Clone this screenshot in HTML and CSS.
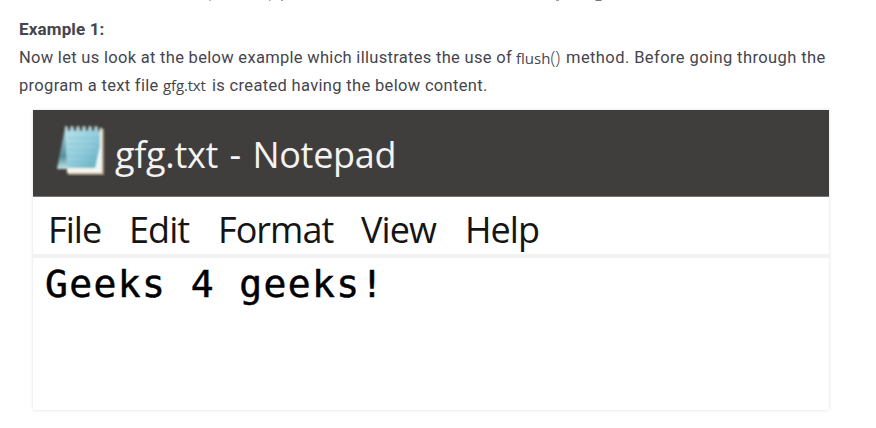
FILE: index.html
```
<!DOCTYPE html>
<html lang="en">
<head>
<meta charset="utf-8">
<title>Example 1</title>
<link rel="stylesheet" href="styles.css">
</head>
<body>
<article class="article">
  <svg class="previous" width="876" height="2" viewBox="0 0 876 2" fill="none" stroke="#777780">
    <path d="M209 .5h2" opacity=".5"/><path d="M269 .5h1.500M281 .5h2M556 .5h3" opacity=".7"/><path d="M595.500 .5h6"/>
  </svg>
  <h2 class="heading">Example 1:</h2>
  <p class="line"><span class="a">Now let us look at the below example which illustrates the use of</span><code class="flush">flush<span class="parens">()</span></code><span class="b">method. Before going through the</span></p>
  <p class="line"><span class="c">program a text file</span><code class="file">gfg.txt</code><span class="d">is created having the below content.</span></p>
  <section class="notepad">
    <header class="titlebar">
      <svg class="icon" width="52" height="54" viewBox="0 0 52 54">
        <defs>
          <linearGradient id="page" x1="0" y1="0" x2="1" y2="1"><stop stop-color="#b9e2ea"/><stop offset=".55" stop-color="#91cbdc"/><stop offset="1" stop-color="#60aebd"/></linearGradient>
          <linearGradient id="fold" x1="0" y1="0" x2="0" y2="1"><stop stop-color="#a9cbd0"/><stop offset=".7" stop-color="#55919b"/><stop offset="1" stop-color="#c5e7e8"/></linearGradient>
          <filter id="soft"><feGaussianBlur stdDeviation=".8"/></filter>
        </defs>
        <g filter="url(#soft)">
          <path d="M10 6L2 47h12V6z" fill="url(#fold)"/>
          <path d="M13 7h36v46H13z" fill="#a79a83"/>
          <path d="M12 6h35v45H12z" fill="#f5f5ec"/>
          <path d="M10 6h35v29l-2 11H12z" fill="url(#page)"/>
          <path d="M45 24v23h-5z" fill="#eaf8fa"/>
          <path d="M13 16h30M13 22h30M13 28h30M13 34h29M13 40h27" stroke="#75b8ca" opacity=".5"/>
          <path d="M14 4v5M20 4v5M26 4v5M32 4v5M38 4v5M44 4v5" stroke="#30434a" stroke-width="2.500"/>
          <path d="M11 4v5M17 4v5M23 4v5M29 4v5M35 4v5M41 4v5" stroke="#c4d2d3" stroke-width="2"/>
        </g>
      </svg>
      <span class="title">gfg.txt - Notepad</span>
    </header>
    <nav class="menu"><span class="m1">File</span><span class="m2">Edit</span><span class="m3">Format</span><span class="m4">View</span><span class="m5">Help</span></nav>
    <div class="content">Geeks 4 geeks!</div>
  </section>
</article>
</body>
</html>
```
FILE: styles.css
```
* { box-sizing: border-box; }
body { margin: 0; background: #fff; overflow: hidden; }
.article { height: 428px; color: #45454e; font: 16.5px/28px Roboto, sans-serif; }
.previous { display: block; }
.heading { margin: 13px 0 0 19px; font-size: 17px; line-height: 28px; font-weight: 700; letter-spacing: .15px; }
.line { margin: 0 0 0 19px; height: 28px; display: flex; white-space: nowrap; line-height: 30px; }
.line span, .line code { flex: none; }
.a { width: 497px; letter-spacing: .3px; }
.b { letter-spacing: .41px; }
.c { width: 144px; letter-spacing: .32px; }
.d { letter-spacing: .33px; }
.flush, .file { font-family: "Open Sans", sans-serif; font-size: 15px; line-height: 28px; }
.flush { width: 50px; letter-spacing: 0; }
.parens { font-weight: 300; font-size: 18px; }
.file { width: 49px; letter-spacing: -.15px; }
.notepad { width: 796px; height: 300px; margin: 11px 0 0 33px; box-shadow: 0 0 3px #ddd; }
.titlebar { height: 87px; display: flex; align-items: flex-start; padding: 12px 0 0 22px; background: #403e3c; border-bottom: 1px solid #777; color: #f3f3f3; }
.icon { flex: none; }
.title { margin-left: 8px; font: 36px/65px "Open Sans", sans-serif; white-space: nowrap; letter-spacing: -.3px; word-spacing: 2.500px; }
.menu { height: 61px; padding-left: 15px; display: flex; border-bottom: 4px solid #f2f2f2; color: #151515; font: 36px/65px "Open Sans", sans-serif; letter-spacing: -.95px; }
.menu span { flex: none; white-space: nowrap; }
.m1 { width: 81px; }
.m2 { width: 89px; }
.m3 { width: 143px; }
.m4 { width: 104px; }
.content { padding-left: 12px; color: #000; font: 38px/53px "DejaVu Sans Mono", monospace; letter-spacing: 1.400px; white-space: pre; -webkit-text-stroke: .5px #000; }
```
